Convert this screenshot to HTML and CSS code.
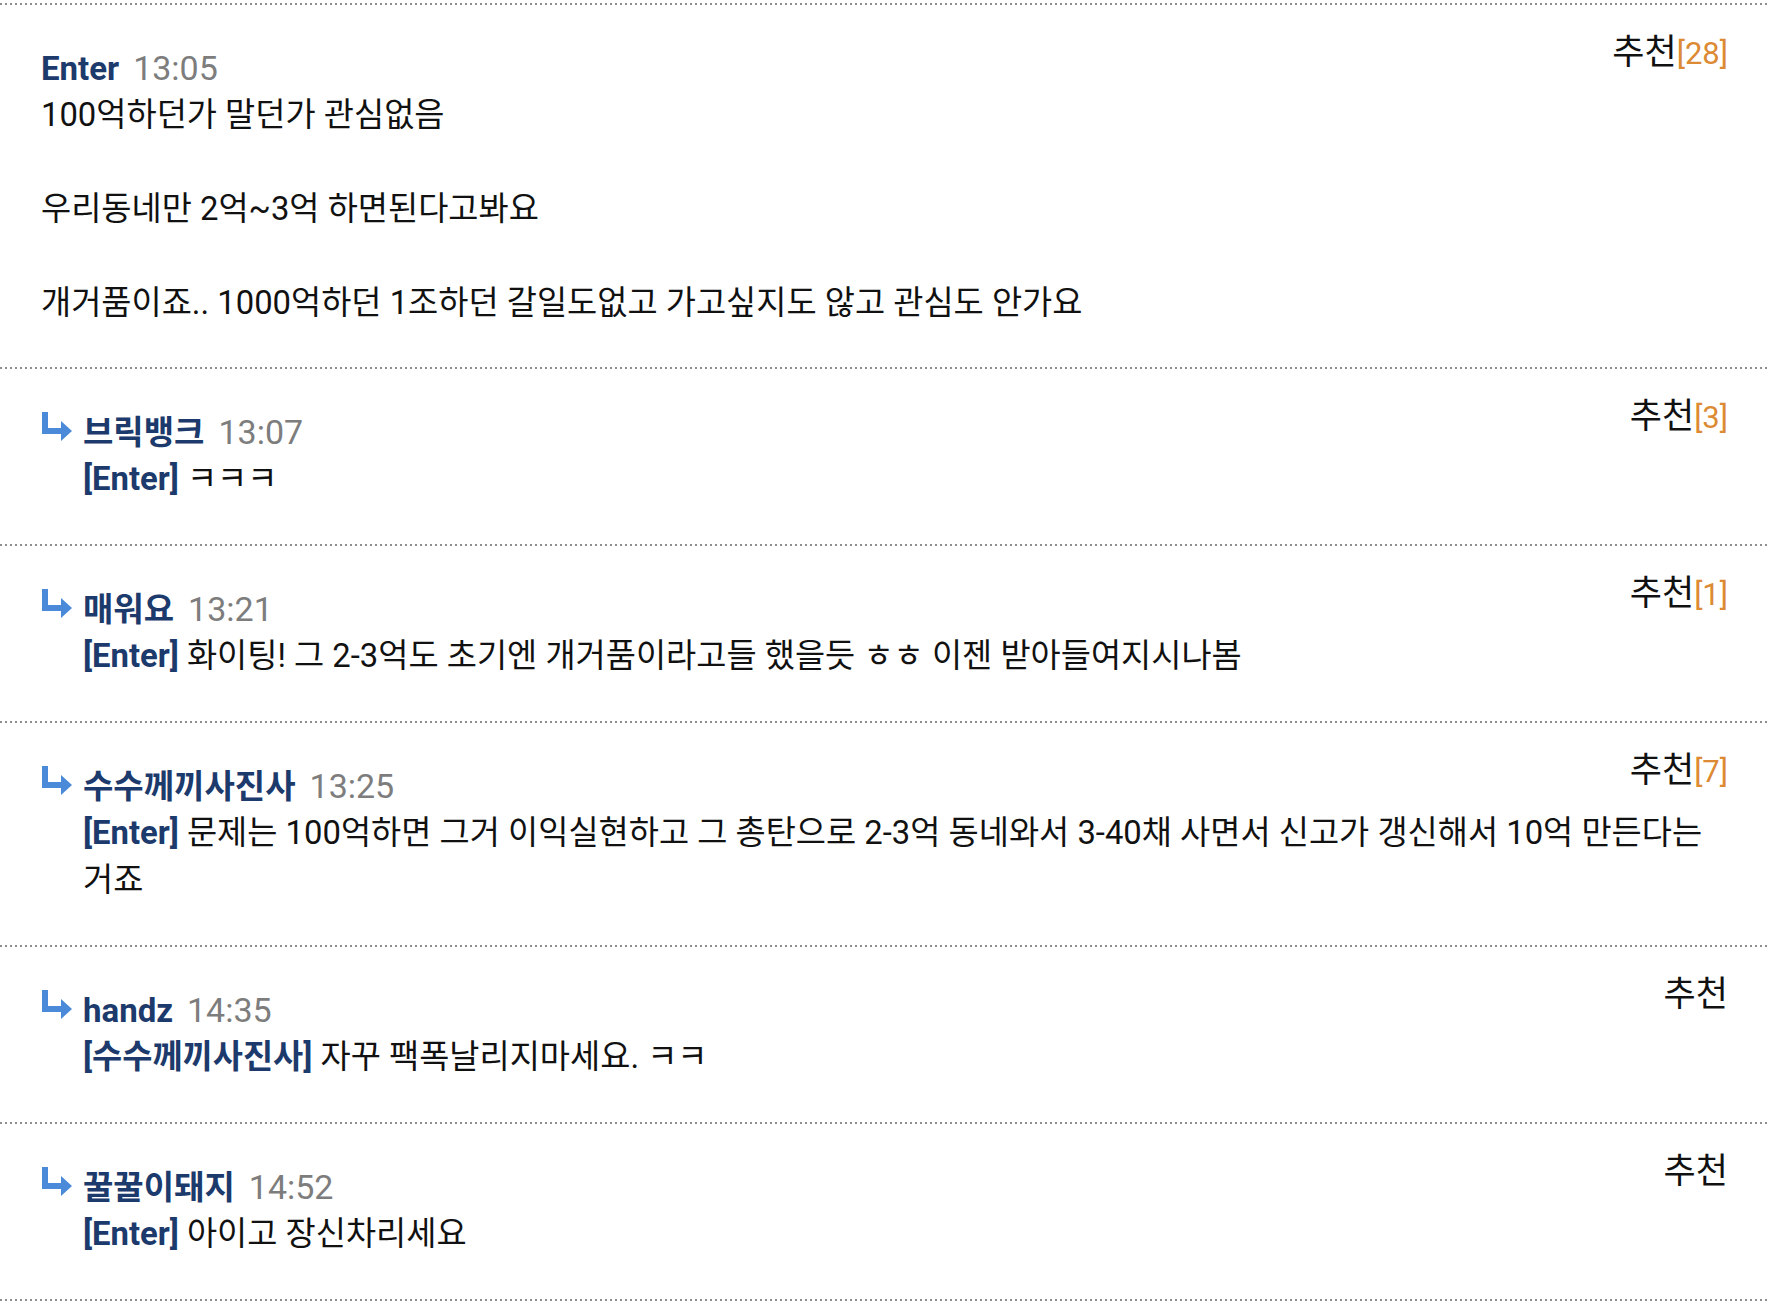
FILE: index.html
```html
<!DOCTYPE html>
<html lang="ko">
<head>
<meta charset="utf-8">
<title>댓글</title>
<link rel="stylesheet" href="styles.css">
</head>
<body>
<div class="list">
  <div class="comment">
    <div class="rec">추천<span class="cnt">[28]</span></div>
    <div class="head"><span class="name">Enter</span><span class="time">13:05</span></div>
    <div class="text">100억하던가 말던가 관심없음<br><br>우리동네만 2억~3억 하면된다고봐요<br><br>개거품이죠.. 1000억하던 1조하던 갈일도없고 가고싶지도 않고 관심도 안가요</div>
  </div>
  <div class="comment reply">
    <div class="rec">추천<span class="cnt">[3]</span></div>
    <div class="head"><svg class="arrow" width="31" height="29" viewBox="0 0 31 29"><path d="M1 0h6v16h13V9l11 10-11 10v-7H1z" fill="#4a8ad9"/></svg><span class="name">브릭뱅크</span><span class="time">13:07</span></div>
    <div class="text"><span class="to">[Enter]</span> ㅋㅋㅋ</div>
  </div>
  <div class="comment reply">
    <div class="rec">추천<span class="cnt">[1]</span></div>
    <div class="head"><svg class="arrow" width="31" height="29" viewBox="0 0 31 29"><path d="M1 0h6v16h13V9l11 10-11 10v-7H1z" fill="#4a8ad9"/></svg><span class="name">매워요</span><span class="time">13:21</span></div>
    <div class="text"><span class="to">[Enter]</span> 화이팅! 그 2-3억도 초기엔 개거품이라고들 했을듯 ㅎㅎ 이젠 받아들여지시나봄</div>
  </div>
  <div class="comment reply">
    <div class="rec">추천<span class="cnt">[7]</span></div>
    <div class="head"><svg class="arrow" width="31" height="29" viewBox="0 0 31 29"><path d="M1 0h6v16h13V9l11 10-11 10v-7H1z" fill="#4a8ad9"/></svg><span class="name">수수께끼사진사</span><span class="time">13:25</span></div>
    <div class="text"><span class="to">[Enter]</span> 문제는 100억하면 그거 이익실현하고 그 총탄으로 2-3억 동네와서 3-40채 사면서 신고가 갱신해서 10억 만든다는 거죠</div>
  </div>
  <div class="comment reply">
    <div class="rec">추천</div>
    <div class="head"><svg class="arrow" width="31" height="29" viewBox="0 0 31 29"><path d="M1 0h6v16h13V9l11 10-11 10v-7H1z" fill="#4a8ad9"/></svg><span class="name">handz</span><span class="time">14:35</span></div>
    <div class="text"><span class="to">[수수께끼사진사]</span> 자꾸 팩폭날리지마세요. ㅋㅋ</div>
  </div>
  <div class="comment reply">
    <div class="rec">추천</div>
    <div class="head"><svg class="arrow" width="31" height="29" viewBox="0 0 31 29"><path d="M1 0h6v16h13V9l11 10-11 10v-7H1z" fill="#4a8ad9"/></svg><span class="name">꿀꿀이돼지</span><span class="time">14:52</span></div>
    <div class="text"><span class="to">[Enter]</span> 아이고 장신차리세요</div>
  </div>
</div>
</body>
</html>
```

FILE: styles.css
```css
html, body {
  margin: 0;
  padding: 0;
  background: #ffffff;
}

body {
  font-family: Roboto, "Noto Sans CJK KR", sans-serif;
  color: #111111;
  padding-top: 3px;
}

.list {
  padding-bottom: 2px;
  background-image: linear-gradient(to right, #8e8e8e 2px, transparent 2px);
  background-size: 5px 2px;
  background-repeat: repeat-x;
  background-position: left bottom;
}

.comment {
  padding: 42px 40px 40px 41px;
  font-size: 32.8px;
  line-height: 47px;
  background-image: linear-gradient(to right, #8e8e8e 2px, transparent 2px);
  background-size: 5px 2px;
  background-repeat: repeat-x;
  background-position: left top;
}

.comment.reply {
  padding-bottom: 41px;
}

.rec {
  float: right;
  margin-top: -16px;
  font-size: 35px;
  color: #111111;
}

.cnt {
  color: #dc8a33;
  font-size: 31px;
}

.head {
  font-size: 33px;
  white-space: nowrap;
}

.arrow {
  display: inline-block;
  vertical-align: 3px;
  margin-right: 11px;
}

.name {
  font-weight: 700;
  color: #1c3a6c;
}

.time {
  color: #7d7d7d;
  font-size: 34px;
  margin-left: 14px;
}

.reply .text {
  padding-left: 42px;
}

.to {
  font-weight: 700;
  color: #1c3a6c;
}
```
